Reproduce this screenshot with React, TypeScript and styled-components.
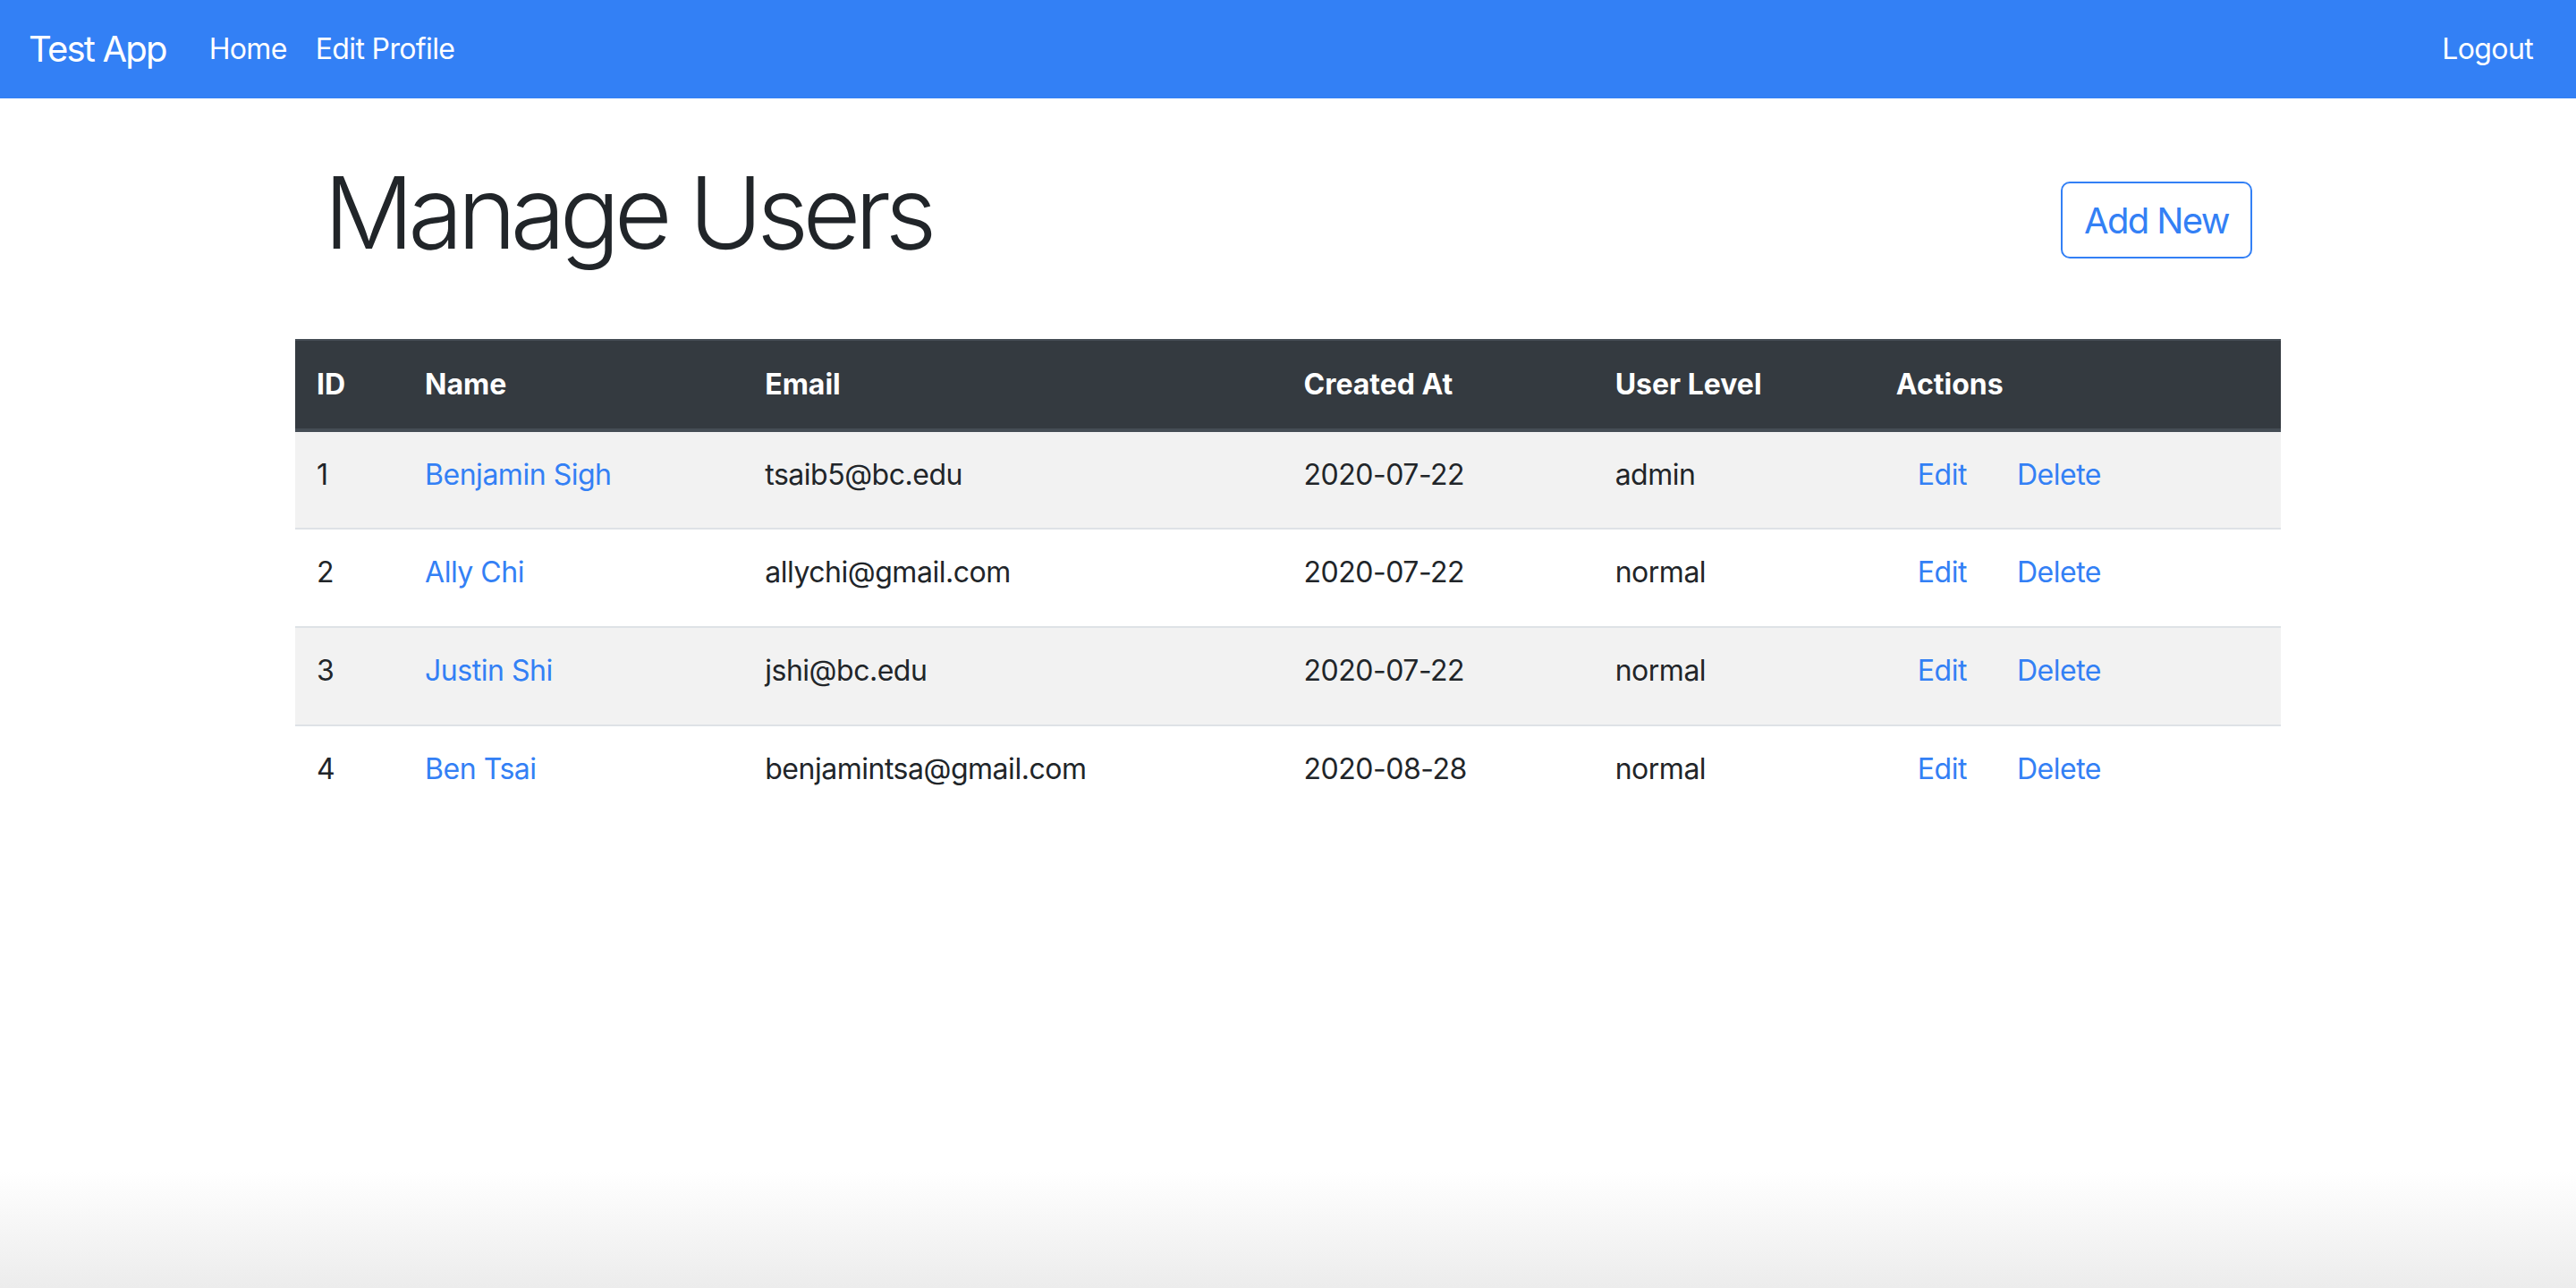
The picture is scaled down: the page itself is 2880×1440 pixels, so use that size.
import styled, { createGlobalStyle } from 'styled-components'

const GlobalStyle = createGlobalStyle`
  html, body {
    margin: 0;
    padding: 0;
  }
  body {
    font-family: Inter, "Noto Sans", "Liberation Sans", sans-serif;
    font-size: 32px;
    line-height: 1.5;
    letter-spacing: -0.015em;
    color: #212529;
    background: #ffffff;
  }
  * {
    box-sizing: border-box;
  }
`

const Page = styled.div`
  min-height: 100vh;
  background: linear-gradient(to bottom, #ffffff calc(100% - 130px), #ececec 100%);
`

const Navbar = styled.nav`
  display: flex;
  align-items: center;
  height: 110px;
  padding: 0 32px;
  background: #3380f5;
  color: #ffffff;
`

const Brand = styled.a`
  font-size: 40px;
  letter-spacing: -0.045em;
  margin-right: 32px;
  color: #ffffff;
  text-decoration: none;
`

const NavLinks = styled.div`
  display: flex;
  flex: 1;
`

const NavLink = styled.a<{ $push?: boolean }>`
  padding: 0 16px;
  font-size: 32px;
  letter-spacing: -0.02em;
  color: #ffffff;
  text-decoration: none;
  margin-left: ${(p) => (p.$push ? 'auto' : '0')};
`

const Container = styled.main`
  max-width: 2280px;
  margin: 0 auto;
  padding: 0 30px;
`

const Header = styled.div`
  display: flex;
  justify-content: space-between;
  align-items: flex-start;
  padding: 0 32px;
  margin-top: 48px;
`

const Title = styled.h1`
  margin: 0;
  padding-top: 12px;
  font-size: 112px;
  font-weight: 300;
  line-height: 134px;
  letter-spacing: -0.058em;
`

const OutlineButton = styled.button`
  margin-top: 45px;
  height: 86px;
  padding: 0 24px;
  font-family: inherit;
  font-size: 40px;
  letter-spacing: -0.04em;
  color: #3380f5;
  background: #ffffff;
  border: 2px solid #3380f5;
  border-radius: 10px;
  cursor: pointer;
`

const Table = styled.table`
  width: 100%;
  margin-top: 75px;
  border-collapse: collapse;
  table-layout: fixed;
`

const HeadCell = styled.th`
  padding: 25px 24px;
  text-align: left;
  font-weight: 700;
  line-height: 48px;
  letter-spacing: 0;
  color: #ffffff;
  background: #343a40;
  border-top: 2px solid #454d55;
  border-bottom: 4px solid #454d55;
`

const Row = styled.tr<{ $striped: boolean }>`
  height: 110px;
  background: ${(p) => (p.$striped ? '#f2f2f2' : 'transparent')};
`

const Cell = styled.td`
  padding: 24px;
  vertical-align: top;
  line-height: 48px;
  border-top: 2px solid #dee2e6;
  white-space: nowrap;
`

const NameLink = styled.a`
  color: #3380f5;
  text-decoration: none;
`

const ActionButton = styled.button`
  padding: 0 24px;
  margin-right: 8px;
  font-family: inherit;
  font-size: 32px;
  line-height: 48px;
  letter-spacing: -0.015em;
  color: #3380f5;
  background: none;
  border: none;
  cursor: pointer;
`

const users = [
  { id: 1, name: 'Benjamin Sigh', email: 'tsaib5@bc.edu', created: '2020-07-22', level: 'admin' },
  { id: 2, name: 'Ally Chi', email: 'allychi@gmail.com', created: '2020-07-22', level: 'normal' },
  { id: 3, name: 'Justin Shi', email: 'jshi@bc.edu', created: '2020-07-22', level: 'normal' },
  { id: 4, name: 'Ben Tsai', email: 'benjamintsa@gmail.com', created: '2020-08-28', level: 'normal' },
]

const columns = [
  { label: 'ID', width: 121 },
  { label: 'Name', width: 380 },
  { label: 'Email', width: 602 },
  { label: 'Created At', width: 348 },
  { label: 'User Level', width: 314 },
  { label: 'Actions', width: 454 },
]

export default function App() {
  return (
    <Page>
      <GlobalStyle />
      <Navbar>
        <Brand href="#">Test App</Brand>
        <NavLinks>
          <NavLink href="#">Home</NavLink>
          <NavLink href="#">Edit Profile</NavLink>
          <NavLink href="#" $push>
            Logout
          </NavLink>
        </NavLinks>
      </Navbar>

      <Container>
        <Header>
          <Title>Manage Users</Title>
          <OutlineButton>Add New</OutlineButton>
        </Header>

        <Table>
          <colgroup>
            {columns.map((c) => (
              <col key={c.label} style={{ width: c.width }} />
            ))}
          </colgroup>
          <thead>
            <tr>
              {columns.map((c) => (
                <HeadCell key={c.label}>{c.label}</HeadCell>
              ))}
            </tr>
          </thead>
          <tbody>
            {users.map((u, i) => (
              <Row key={u.id} $striped={i % 2 === 0}>
                <Cell>{u.id}</Cell>
                <Cell>
                  <NameLink href="#">{u.name}</NameLink>
                </Cell>
                <Cell>{u.email}</Cell>
                <Cell>{u.created}</Cell>
                <Cell>{u.level}</Cell>
                <Cell>
                  <ActionButton>Edit</ActionButton>
                  <ActionButton>Delete</ActionButton>
                </Cell>
              </Row>
            ))}
          </tbody>
        </Table>
      </Container>
    </Page>
  )
}
